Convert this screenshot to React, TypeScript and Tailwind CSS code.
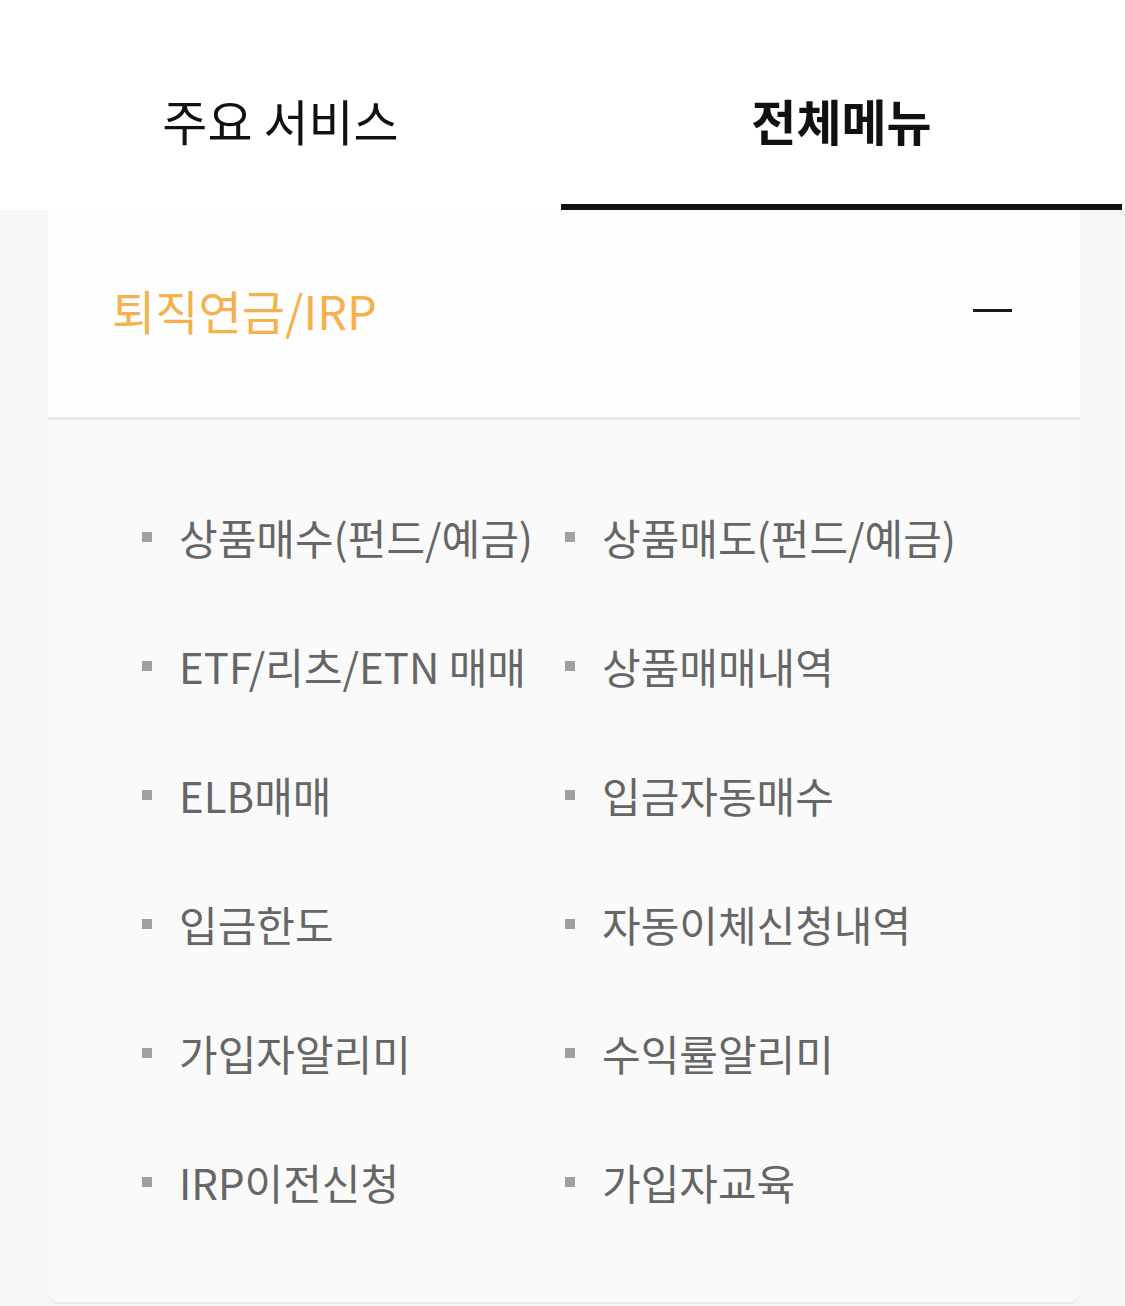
import React from "react";

const items = [
  "상품매수(펀드/예금)",
  "상품매도(펀드/예금)",
  "ETF/리츠/ETN 매매",
  "상품매매내역",
  "ELB매매",
  "입금자동매수",
  "입금한도",
  "자동이체신청내역",
  "가입자알리미",
  "수익률알리미",
  "IRP이전신청",
  "가입자교육",
];

export default function App() {
  return (
    <div
      className="w-[1125px] min-h-[1306px] bg-[#f6f6f6]"
      style={{ fontFamily: '"Noto Sans CJK KR", "Noto Sans", sans-serif' }}
    >
      {/* Tabs */}
      <div className="flex h-[210px] bg-white">
        <div className="flex w-[561px] items-center justify-center pt-[30px] text-[49px] text-[#111]">
          주요 서비스
        </div>
        <div className="relative flex w-[561px] items-center justify-center pt-[30px] text-[49px] font-bold text-[#111]">
          전체메뉴
          <span className="absolute bottom-0 left-0 h-[6px] w-full bg-[#111]" />
        </div>
      </div>

      {/* Accordion card */}
      <div className="ml-[48px] w-[1032px] overflow-hidden rounded-b-[12px] shadow-[0_2px_1px_rgba(0,0,0,0.05)]">
        <div className="flex h-[207px] items-center justify-between bg-[#fefefe] pb-[6px] pl-[64px] pr-[68px]">
          <span className="text-[47px] text-[#f5b14e]">퇴직연금/IRP</span>
          <span className="h-[3px] w-[39px] bg-[#1a1a1a]" />
        </div>
        <div className="h-[3px] bg-[#ebebeb]" />
        <ul className="grid grid-cols-[423px_423px] bg-[#fafafa] py-[54px] pl-[94px]">
          {items.map((t) => (
            <li key={t} className="flex h-[129px] items-center gap-[27px] pb-[4px]">
              <span className="h-[10px] w-[10px] shrink-0 bg-[#a0a0a0]" />
              <span className="whitespace-nowrap text-[42px] text-[#666]">{t}</span>
            </li>
          ))}
        </ul>
      </div>
    </div>
  );
}
